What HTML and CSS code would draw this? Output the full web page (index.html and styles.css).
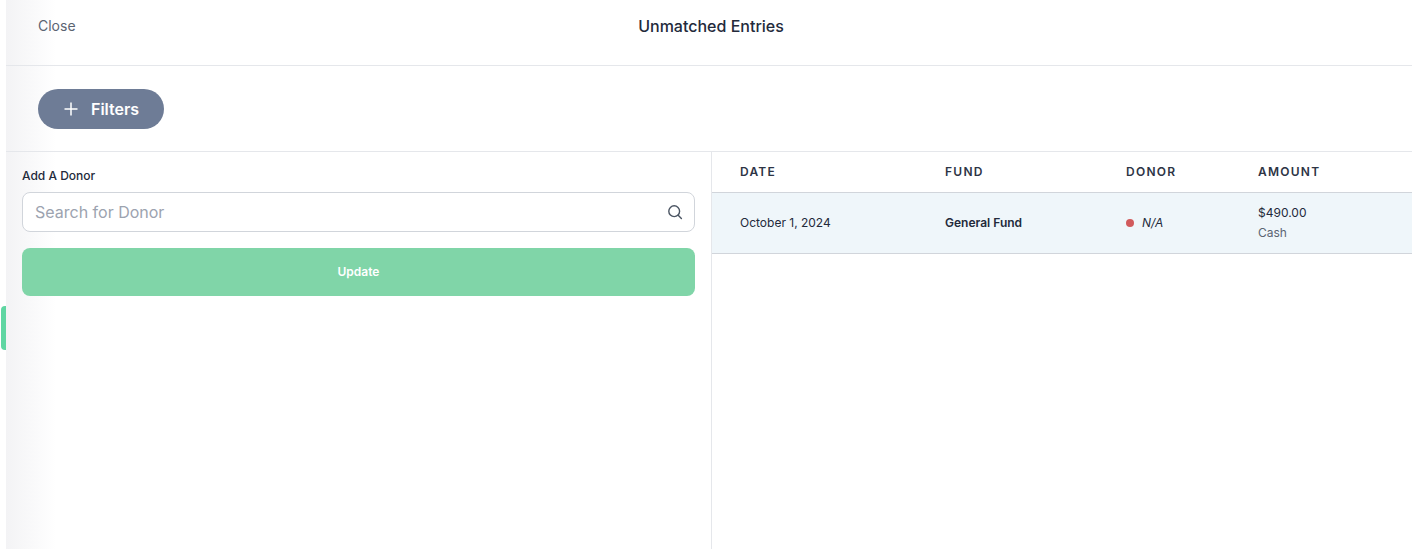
FILE: index.html
```html
<!DOCTYPE html>
<html lang="en">
<head>
<meta charset="utf-8">
<title>Unmatched Entries</title>
<link rel="stylesheet" href="styles.css">
</head>
<body>
<div class="handle"></div>
<main class="panel">
  <header class="topbar">
    <a class="close">Close</a>
    <h1 class="title">Unmatched Entries</h1>
  </header>
  <div class="filterbar">
    <button class="filters">
      <svg class="plus" width="14" height="14" viewBox="0 0 14 14"><path d="M7 .5v13M.5 7h13" stroke="#fff" stroke-width="1.5" fill="none"/></svg>
      <span>Filters</span>
    </button>
  </div>
  <div class="columns">
    <section class="left">
      <label class="label">Add A Donor</label>
      <div class="search">
        <span class="placeholder">Search for Donor</span>
        <svg class="glass" width="16" height="16" viewBox="0 0 16 16"><circle cx="7.2" cy="7.2" r="5.4" stroke="#4b5563" stroke-width="1.4" fill="none"/><path d="M11.2 11.2l3.2 3.2" stroke="#4b5563" stroke-width="1.4" stroke-linecap="round"/></svg>
      </div>
      <button class="update">Update</button>
    </section>
    <section class="right">
      <div class="row head">
        <div class="c-date">DATE</div>
        <div class="c-fund">FUND</div>
        <div class="c-donor">DONOR</div>
        <div class="c-amount">AMOUNT</div>
      </div>
      <div class="row entry">
        <div class="c-date">October 1, 2024</div>
        <div class="c-fund strong">General Fund</div>
        <div class="c-donor donor"><i class="dot"></i><em>N/A</em></div>
        <div class="c-amount amount"><div>$490.00</div><div class="method">Cash</div></div>
      </div>
    </section>
  </div>
</main>
</body>
</html>
```
FILE: styles.css
```css
* { box-sizing: border-box; }
html, body { margin: 0; height: 100%; overflow: hidden; background: #fff; }
body { font-family: Inter, "Liberation Sans", sans-serif; color: #1f2937; padding-left: 6px; }
.handle { position: absolute; left: 1px; top: 306px; width: 5px; height: 44px; background: #5fd6a2; border-radius: 4px 0 0 4px; }
.panel { position: relative; height: 549px; display: flex; flex-direction: column; background: #fff; }
.panel::before { content: ""; position: absolute; left: 0; top: 0; bottom: 0; width: 50px; pointer-events: none; background: linear-gradient(to right, #f3f3f5, rgba(255,255,255,0)); z-index: 0; }
.topbar { position: relative; height: 66px; flex: none; border-bottom: 1px solid #e5e7eb; display: flex; align-items: flex-start; padding: 17px 32px 0; }
.close { font-size: 14px; line-height: 18px; color: #5b6472; }
.title { position: absolute; left: 4px; right: 0; top: 16px; margin: 0; text-align: center; font-size: 16px; line-height: 20px; font-weight: 500; color: #232a3b; }
.filterbar { position: relative; height: 86px; flex: none; border-bottom: 1px solid #e5e7eb; padding: 23px 32px 0; }
.filters { display: flex; align-items: center; gap: 13px; height: 40px; width: 126px; padding: 0 0 0 26px; border: 0; border-radius: 20px; background: #6e7c96; color: #fff; font: 600 16px/20px Inter, "Liberation Sans", sans-serif; }
.columns { position: relative; flex: 1; display: flex; min-height: 0; }
.left { width: 706px; flex: none; border-right: 1px solid #e5e7eb; padding: 16px 16px 0; }
.label { display: block; font-size: 12px; line-height: 16px; font-weight: 500; color: #232a3b; }
.search { margin-top: 8px; height: 40px; border: 1px solid #d1d5db; border-radius: 8px; display: flex; align-items: center; justify-content: space-between; padding: 0 11px 0 12px; background: #fff; }
.placeholder { font-size: 16px; color: #9ca3af; }
.update { display: block; width: 100%; margin-top: 16px; height: 48px; border: 0; border-radius: 8px; background: #80d5a8; color: #fff; font: 600 12px/16px Inter, "Liberation Sans", sans-serif; }
.right { flex: 1; min-width: 0; }
.row { display: grid; grid-template-columns: 205px 181px 132px 1fr; padding-left: 28px; align-items: center; }
.head { height: 41px; border-bottom: 1px solid #d1d5db; font-size: 12px; line-height: 16px; font-weight: 600; letter-spacing: 1.25px; color: #2d3445; }
.entry { height: 61px; background: #eff6fa; border-bottom: 1px solid #d1d5db; font-size: 12px; line-height: 16px; color: #232a3b; }
.strong { font-weight: 600; }
.donor { display: flex; align-items: center; gap: 8px; }
.dot { width: 8px; height: 8px; border-radius: 50%; background: #d15a5c; }
.amount { line-height: 20px; }
.method { color: #5b6472; }
```
